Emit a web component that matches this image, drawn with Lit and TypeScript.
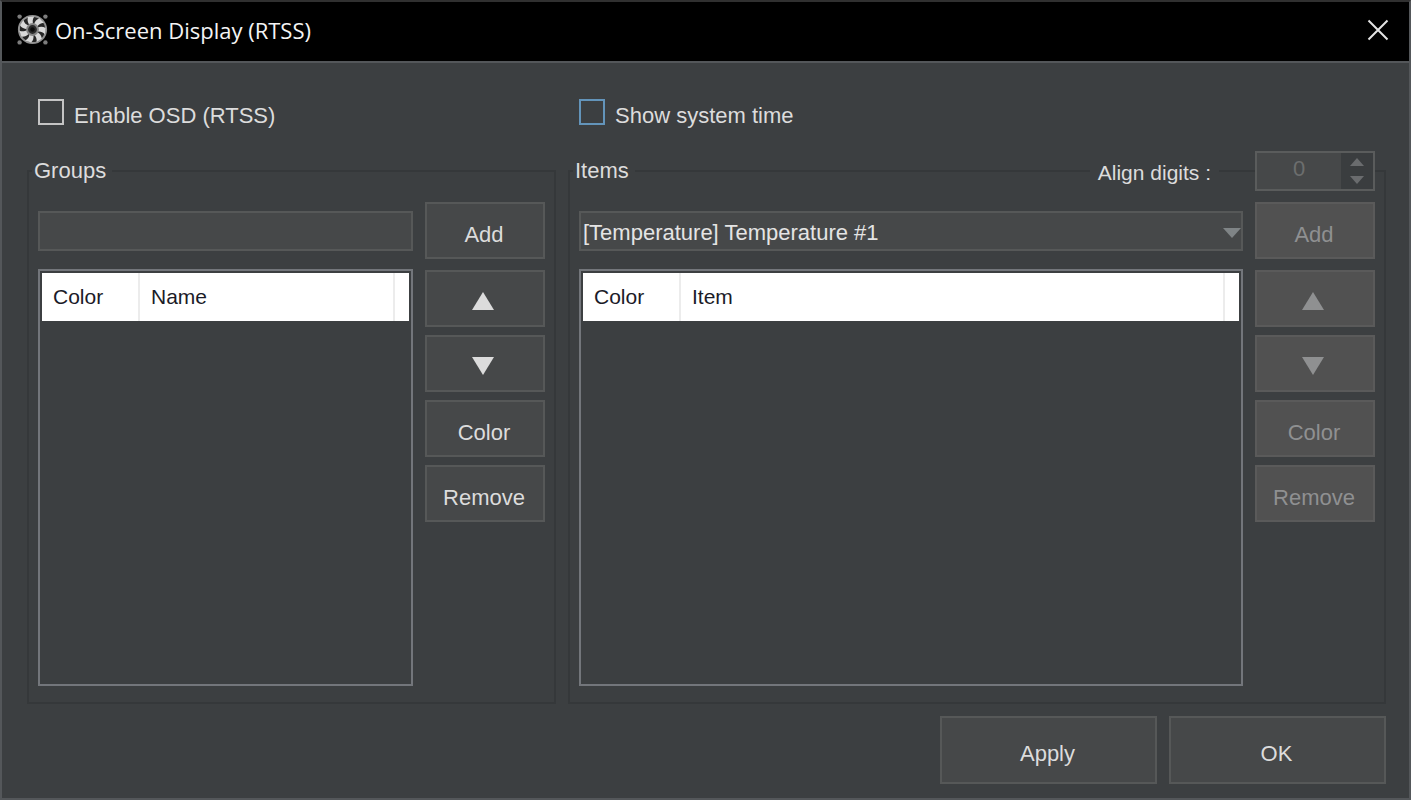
import { LitElement, html, css, svg } from "lit";
import { customElement, property } from "lit/decorators.js";

const blades = [0, 1, 2, 3, 4, 5, 6];

@customElement("fan-icon")
export class FanIcon extends LitElement {
  static styles = css`
    :host {
      display: block;
      width: 32px;
      height: 32px;
    }
    svg {
      display: block;
    }
  `;

  render() {
    return html`
      <svg width="32" height="32" viewBox="0 0 32 32" aria-hidden="true">
        <g fill="#7c7c7c">
          <circle cx="2.6" cy="2.6" r="2.2" />
          <circle cx="28.4" cy="2.6" r="2.2" />
          <circle cx="2.6" cy="28.4" r="2.2" />
          <circle cx="28.4" cy="28.4" r="2.2" />
        </g>
        <circle cx="15.5" cy="15.5" r="13.6" fill="#262626" stroke="#909090" stroke-width="2" />
        <g fill="#d8d8d8">
          ${blades.map(
            (i) => svg`<path transform="rotate(${(i * 360) / 7 - 14} 15.5 15.5)" d="M13.6 10.6 C12.4 7.6 12.6 4.8 14.2 2.4 L20.4 3.2 C18 5.4 17.2 7.6 17.6 10.8 Z" />`
          )}
        </g>
        <circle cx="15.5" cy="15.5" r="5.4" fill="#2a2a2a" stroke="#848484" stroke-width="2" />
        <circle cx="15.5" cy="15.5" r="2.2" fill="#0a0a0a" />
      </svg>
    `;
  }
}

@customElement("osd-button")
export class OsdButton extends LitElement {
  @property() label = "";
  @property() arrow = "";
  @property({ type: Boolean }) disabled = false;

  static styles = css`
    :host {
      display: block;
      height: 57px;
    }
    .button {
      display: flex;
      align-items: center;
      justify-content: center;
      box-sizing: border-box;
      width: 100%;
      height: 100%;
      margin: 0;
      padding: 8px 2px 0 0;
      border: 2px solid #565858;
      border-radius: 0;
      background: #464849;
      color: #dcdcdc;
      font: 22px/28px "Liberation Sans", Arial, sans-serif;
    }
    .button:disabled {
      border-color: #5a5a5a;
      background: #515151;
      color: #8f9091;
    }
    .triangle {
      display: block;
      fill: currentColor;
      margin: 0 2px 4px 0;
    }
  `;

  render() {
    const points = this.arrow === "up" ? "11,0 22,18 0,18" : "0,0 22,0 11,18";
    return html`
      <button class="button" type="button" ?disabled=${this.disabled} aria-label=${this.label}>
        ${this.arrow
          ? html`<svg class="triangle" width="22" height="18" aria-hidden="true"><polygon points=${points} /></svg>`
          : this.label}
      </button>
    `;
  }
}

@customElement("osd-list")
export class OsdList extends LitElement {
  @property() column = "";

  static styles = css`
    :host {
      display: block;
      box-sizing: border-box;
      border: 2px solid #73767b;
      padding: 2px;
    }
    .table {
      width: 100%;
      border-collapse: separate;
      border-spacing: 0;
      table-layout: fixed;
      background: #ffffff;
      color: #1b1b28;
      font: 21px/28px "Liberation Sans", Arial, sans-serif;
    }
    .cell {
      box-sizing: border-box;
      height: 48px;
      padding: 0 0 0 11px;
      border-right: 2px solid #ececec;
      text-align: left;
      font-weight: normal;
    }
    .color {
      width: 98px;
    }
    .rest {
      width: 14px;
      padding: 0;
      border-right: 0;
    }
  `;

  render() {
    return html`
      <table class="table">
        <thead>
          <tr>
            <th class="cell color" scope="col">Color</th>
            <th class="cell" scope="col">${this.column}</th>
            <td class="cell rest"></td>
          </tr>
        </thead>
        <tbody></tbody>
      </table>
    `;
  }
}

@customElement("app-root")
export class AppRoot extends LitElement {
  static styles = css`
    :host {
      display: block;
      color: #dcdcdc;
      font: 22px/28px "Liberation Sans", Arial, sans-serif;
    }
    .window {
      display: flex;
      flex-direction: column;
      box-sizing: border-box;
      min-height: 100vh;
      border: 2px solid #54575a;
      border-top-color: #303030;
      background: #3c3f41;
    }
    .titlebar {
      display: flex;
      align-items: center;
      gap: 6px;
      box-sizing: border-box;
      height: 61px;
      padding: 0 20px 3px 15px;
      border-bottom: 2px solid #54575a;
      background: #000000;
      color: #f4f4f4;
    }
    .title {
      flex: 1;
      margin: 0;
      font: 22px/30px "Open Sans", "Noto Sans", sans-serif;
    }
    .close {
      display: block;
      margin: 0;
      padding: 0;
      border: 0;
      background: none;
      color: #e4e4e4;
    }
    .close svg {
      display: block;
    }
    .content {
      flex: 1;
      display: grid;
      grid-template-columns: 529fr 818fr;
      grid-template-rows: auto 1fr auto;
      column-gap: 12px;
      padding: 36px 23px 14px 25px;
    }
    .check {
      display: flex;
      align-items: flex-start;
      gap: 10px;
      margin: 0 11px 18px;
      line-height: 34px;
    }
    .box {
      appearance: none;
      box-sizing: border-box;
      width: 26px;
      height: 26px;
      margin: 0;
      border: 2px solid #c4c4c4;
    }
    .box.hot {
      border-color: #6394ba;
    }
    .group {
      position: relative;
      display: grid;
      grid-template-columns: minmax(0, 1fr) 120px;
      grid-template-rows: 40px 1fr;
      column-gap: 12px;
      row-gap: 11px;
      padding: 0 11px 18px;
    }
    .group::before {
      content: "";
      position: absolute;
      inset: 19px 0 0;
      border: 2px solid #35383a;
      pointer-events: none;
    }
    .head {
      position: relative;
      grid-column: 1 / -1;
      display: flex;
      align-items: center;
      justify-content: space-between;
      margin: 0 0 0 -6px;
    }
    .legend {
      margin: 0;
      padding: 0 6px 0 2px;
      background: #3c3f41;
      font: inherit;
    }
    .align {
      display: flex;
      align-items: center;
      gap: 36px;
    }
    .align-label {
      padding: 4px 8px 0;
      background: #3c3f41;
      font-size: 21px;
    }
    .spinner {
      display: flex;
      box-sizing: border-box;
      width: 120px;
      height: 40px;
      border: 2px solid #5a5c5c;
      background: #464849;
    }
    .digits {
      appearance: textfield;
      flex: 1;
      min-width: 0;
      margin: 0;
      padding: 0 0 4px;
      border: 0;
      background: none;
      color: #6c6e6e;
      font: inherit;
      text-align: center;
    }
    .digits::-webkit-inner-spin-button {
      appearance: none;
      margin: 0;
    }
    .steps {
      display: flex;
      flex-direction: column;
      justify-content: center;
      gap: 10px;
      width: 32px;
      background: #3a3d3f;
    }
    .step {
      display: flex;
      justify-content: center;
      margin: 0;
      padding: 0;
      border: 0;
      background: none;
      color: #6a6c6e;
    }
    .step svg,
    .caret {
      fill: currentColor;
    }
    .field {
      position: relative;
      align-self: center;
      display: block;
    }
    .entry,
    .choice {
      display: block;
      appearance: none;
      box-sizing: border-box;
      width: 100%;
      height: 40px;
      margin: 0;
      padding: 4px 2px 0;
      border: 2px solid #565858;
      border-radius: 0;
      background: #464849;
      color: #e4e4e4;
      font: inherit;
    }
    .caret {
      position: absolute;
      right: 2px;
      top: 17px;
      color: #7f8486;
      pointer-events: none;
    }
    .group-body {
      grid-column: 1 / -1;
      display: grid;
      grid-template-columns: subgrid;
      grid-template-rows: 57px 1fr;
      row-gap: 10px;
    }
    .tools {
      display: flex;
      flex-direction: column;
      gap: 8px;
      padding-top: 1px;
    }
    .footer {
      grid-column: 1 / -1;
      display: flex;
      justify-content: flex-end;
      gap: 12px;
      margin-top: 12px;
    }
    .action {
      width: 217px;
      height: 68px;
    }
  `;

  private tools(disabled: boolean) {
    return html`
      <div class="tools">
        <osd-button arrow="up" label="Move up" ?disabled=${disabled}></osd-button>
        <osd-button arrow="down" label="Move down" ?disabled=${disabled}></osd-button>
        <osd-button label="Color" ?disabled=${disabled}></osd-button>
        <osd-button label="Remove" ?disabled=${disabled}></osd-button>
      </div>
    `;
  }

  render() {
    return html`
      <main class="window">
        <header class="titlebar">
          <fan-icon></fan-icon>
          <h1 class="title">On-Screen Display (RTSS)</h1>
          <button class="close" type="button" aria-label="Close">
            <svg width="22" height="22" viewBox="0 0 22 22" aria-hidden="true">
              <path d="M1.5 1.5 20.5 20.5M20.5 1.5 1.5 20.5" fill="none" stroke="currentColor" stroke-width="2" />
            </svg>
          </button>
        </header>
        <div class="content">
          <label class="check"><input class="box" type="checkbox" />Enable OSD (RTSS)</label>
          <label class="check"><input class="box hot" type="checkbox" />Show system time</label>

          <section class="group" aria-labelledby="groups">
            <div class="head"><h2 class="legend" id="groups">Groups</h2></div>
            <div class="group-body">
              <div class="field"><input class="entry" type="text" aria-label="Group name" /></div>
              <osd-button label="Add"></osd-button>
              <osd-list column="Name"></osd-list>
              ${this.tools(false)}
            </div>
          </section>

          <section class="group" aria-labelledby="items">
            <div class="head">
              <h2 class="legend" id="items">Items</h2>
              <div class="align">
                <label class="align-label" for="digits">Align digits :</label>
                <div class="spinner">
                  <input class="digits" id="digits" type="number" value="0" disabled />
                  <div class="steps">
                    <button class="step" type="button" aria-label="Increase" disabled>
                      <svg width="14" height="8"><polygon points="7,0 14,8 0,8" /></svg>
                    </button>
                    <button class="step" type="button" aria-label="Decrease" disabled>
                      <svg width="14" height="8"><polygon points="0,0 14,0 7,8" /></svg>
                    </button>
                  </div>
                </div>
              </div>
            </div>
            <div class="group-body">
              <div class="field">
                <select class="choice" aria-label="Item">
                  <option>[Temperature] Temperature #1</option>
                </select>
                <svg class="caret" width="18" height="10" aria-hidden="true"><polygon points="0,0 18,0 9,10" /></svg>
              </div>
              <osd-button label="Add" disabled></osd-button>
              <osd-list column="Item"></osd-list>
              ${this.tools(true)}
            </div>
          </section>

          <footer class="footer">
            <osd-button class="action" label="Apply"></osd-button>
            <osd-button class="action" label="OK"></osd-button>
          </footer>
        </div>
      </main>
    `;
  }
}
